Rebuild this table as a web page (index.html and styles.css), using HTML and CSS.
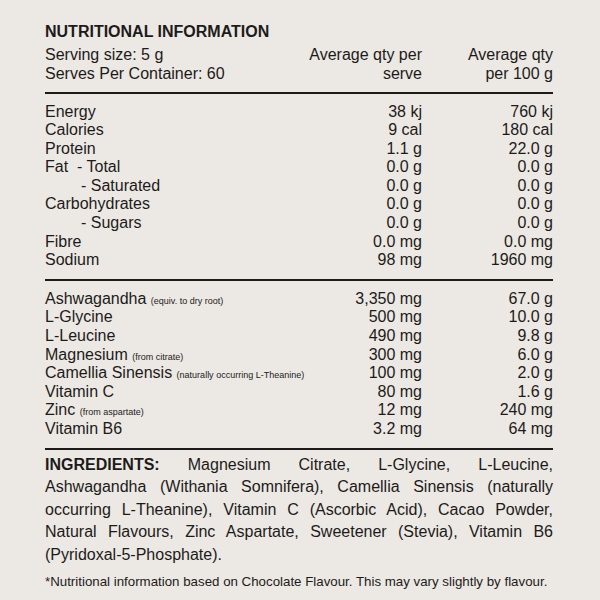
FILE: index.html
```html
<!DOCTYPE html>
<html lang="en">
<head>
<meta charset="utf-8">
<title>Nutritional Information</title>
<link rel="stylesheet" href="styles.css">
</head>
<body>
<main class="panel">
  <h1 class="title">NUTRITIONAL INFORMATION</h1>
  <section class="head">
    <div class="row">
      <div class="label">Serving size: 5 g<br>Serves Per Container: 60</div>
      <div class="val">Average qty per<br>serve</div>
      <div class="val">Average qty<br>per 100 g</div>
    </div>
  </section>
  <div class="rule rule-a"></div>
  <section class="table">
    <div class="row"><div class="label">Energy</div><div class="val">38 kj</div><div class="val">760 kj</div></div>
    <div class="row"><div class="label">Calories</div><div class="val">9 cal</div><div class="val">180 cal</div></div>
    <div class="row"><div class="label">Protein</div><div class="val">1.1 g</div><div class="val">22.0 g</div></div>
    <div class="row"><div class="label">Fat&nbsp; - Total</div><div class="val">0.0 g</div><div class="val">0.0 g</div></div>
    <div class="row"><div class="label sub">- Saturated</div><div class="val">0.0 g</div><div class="val">0.0 g</div></div>
    <div class="row"><div class="label">Carbohydrates</div><div class="val">0.0 g</div><div class="val">0.0 g</div></div>
    <div class="row"><div class="label sub">- Sugars</div><div class="val">0.0 g</div><div class="val">0.0 g</div></div>
    <div class="row"><div class="label">Fibre</div><div class="val">0.0 mg</div><div class="val">0.0 mg</div></div>
    <div class="row"><div class="label">Sodium</div><div class="val">98 mg</div><div class="val">1960 mg</div></div>
  </section>
  <div class="rule rule-b"></div>
  <section class="table">
    <div class="row"><div class="label">Ashwagandha <small>(equiv. to dry root)</small></div><div class="val">3,350 mg</div><div class="val">67.0 g</div></div>
    <div class="row"><div class="label">L-Glycine</div><div class="val">500 mg</div><div class="val">10.0 g</div></div>
    <div class="row"><div class="label">L-Leucine</div><div class="val">490 mg</div><div class="val">9.8 g</div></div>
    <div class="row"><div class="label">Magnesium <small>(from citrate)</small></div><div class="val">300 mg</div><div class="val">6.0 g</div></div>
    <div class="row"><div class="label">Camellia Sinensis <small>(naturally occurring L-Theanine)</small></div><div class="val">100 mg</div><div class="val">2.0 g</div></div>
    <div class="row"><div class="label">Vitamin C</div><div class="val">80 mg</div><div class="val">1.6 g</div></div>
    <div class="row"><div class="label">Zinc <small>(from aspartate)</small></div><div class="val">12 mg</div><div class="val">240 mg</div></div>
    <div class="row"><div class="label">Vitamin B6</div><div class="val">3.2 mg</div><div class="val">64 mg</div></div>
  </section>
  <div class="rule rule-c"></div>
  <p class="ingredients"><strong>INGREDIENTS:</strong> Magnesium Citrate, L-Glycine, L-Leucine, Ashwagandha (Withania Somnifera), Camellia Sinensis (naturally occurring L-Theanine), Vitamin C (Ascorbic Acid), Cacao Powder, Natural Flavours, Zinc Aspartate, Sweetener (Stevia), Vitamin B6 (Pyridoxal-5-Phosphate).</p>
  <p class="note">*Nutritional information based on Chocolate Flavour. This may vary slightly by flavour.</p>
</main>
</body>
</html>
```
FILE: styles.css
```css
html, body {
  margin: 0;
  padding: 0;
  background: #ece8e3;
}
body {
  font-family: "Liberation Sans", Arial, sans-serif;
  color: #1c1b1a;
}
.panel {
  width: 508px;
  margin-left: 45px;
  padding-top: 22px;
}
.title {
  margin: 0;
  font-size: 16px;
  line-height: 20px;
  font-weight: bold;
}
.head {
  margin-top: 3px;
  font-size: 16px;
  line-height: 19px;
}
.row {
  display: grid;
  grid-template-columns: minmax(0, 1fr) 140px 131px;
  height: 18.6px;
}
.head .row {
  height: auto;
}
.label {
  white-space: nowrap;
}
.val {
  text-align: right;
  white-space: nowrap;
}
.sub {
  padding-left: 36px;
}
.table {
  font-size: 16px;
  line-height: 18.6px;
}
.table small {
  font-size: 9px;
  line-height: 1;
}
.rule {
  height: 2px;
  background: #1c1b1a;
}
.rule-a {
  margin: 9px 0 8.5px;
}
.rule-b {
  margin: 9.5px 0 8.5px;
}
.rule-c {
  margin: 9px 0 4px;
}
.ingredients {
  margin: 0;
  font-size: 16px;
  line-height: 22.5px;
  text-align: justify;
}
.ingredients strong {
  font-weight: bold;
}
.note {
  margin: 8px 0 0;
  font-size: 13.3px;
  line-height: 16px;
}
```
